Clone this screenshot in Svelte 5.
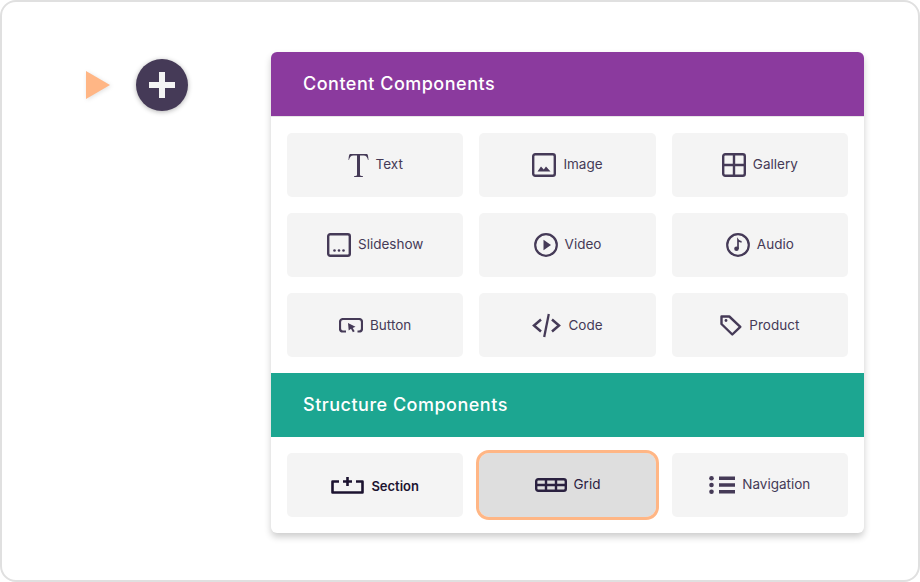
<script>
  // Add-component picker: trigger on the left, two groups of tiles on the right.
  const contentTiles = [
    { label: 'Text', icon: 'text' },
    { label: 'Image', icon: 'image' },
    { label: 'Gallery', icon: 'gallery' },
    { label: 'Slideshow', icon: 'slideshow' },
    { label: 'Video', icon: 'video' },
    { label: 'Audio', icon: 'audio' },
    { label: 'Button', icon: 'button' },
    { label: 'Code', icon: 'code' },
    { label: 'Product', icon: 'product' }
  ];
  const structureTiles = [
    { label: 'Section', icon: 'section', dark: true },
    { label: 'Grid', icon: 'grid', active: true },
    { label: 'Navigation', icon: 'navigation' }
  ];
</script>

{#snippet icon(name)}
  {#if name === 'text'}
    <svg width="21" height="25" viewBox="0 0 21 25" class="ico">
      <path d="M.5 7C.7 3.200 1.200 1 2 1h17c.8 0 1.300 2.200 1.500 6h-.5c-.6-2.800-1.700-4.600-4.500-4.600H12v19.400c0 1 1 1.400 3 1.500V24H6v-.7c2-.1 3-.5 3-1.500V2.400H5.500C2.700 2.400 1.600 4.200 1 7z" fill="currentColor"/>
    </svg>
  {:else if name === 'image'}
    <svg width="24" height="24" viewBox="0 0 24 24" class="ico">
      <rect x="1.200" y="1.200" width="21.600" height="21.600" rx="2" fill="none" stroke="currentColor" stroke-width="2.400"/>
      <path d="M5.500 18.500l3.500-5 2.800 3 2.200-3 4.500 5z" fill="currentColor"/>
    </svg>
  {:else if name === 'gallery'}
    <svg width="24" height="24" viewBox="0 0 24 24" class="ico">
      <rect x="1.200" y="1.200" width="21.600" height="21.600" rx="2" fill="none" stroke="currentColor" stroke-width="2.400"/>
      <path d="M12 1v22M1 12h22" stroke="currentColor" stroke-width="2.400"/>
    </svg>
  {:else if name === 'slideshow'}
    <svg width="24" height="24" viewBox="0 0 24 24" class="ico">
      <rect x="1.200" y="1.200" width="21.600" height="21.600" rx="2" fill="none" stroke="currentColor" stroke-width="2.400"/>
      <circle cx="7.500" cy="17.500" r="1.300" fill="currentColor"/>
      <circle cx="12" cy="17.500" r="1.300" fill="currentColor"/>
      <circle cx="16.500" cy="17.500" r="1.300" fill="currentColor"/>
    </svg>
  {:else if name === 'video'}
    <svg width="24" height="24" viewBox="0 0 24 24" class="ico">
      <circle cx="12" cy="12" r="10.800" fill="none" stroke="currentColor" stroke-width="2.200"/>
      <path d="M9.500 6.800l7.500 5.200-7.500 5.200z" fill="currentColor"/>
    </svg>
  {:else if name === 'audio'}
    <svg width="24" height="24" viewBox="0 0 24 24" class="ico">
      <circle cx="12" cy="12" r="10.800" fill="none" stroke="currentColor" stroke-width="2.200"/>
      <circle cx="10.500" cy="15.800" r="2.300" fill="currentColor"/>
      <path d="M12 16V7c1 1.400 2.200 1.800 3.600 1.900" fill="none" stroke="currentColor" stroke-width="1.700"/>
    </svg>
  {:else if name === 'button'}
    <svg width="24" height="15" viewBox="0 0 24 15" class="ico">
      <path d="M7 13.500H4a3 3 0 0 1-3-3V4a3 3 0 0 1 3-3h16a3 3 0 0 1 3 3v6.500a3 3 0 0 1-3 3h-1.500" fill="none" stroke="currentColor" stroke-width="2.200"/>
      <path d="M9 5l7.500 3.800-2.800 1.100 2 3.300-1.800 1-1.900-3.400-2.300 1.800z" fill="currentColor"/>
    </svg>
  {:else if name === 'code'}
    <svg width="29" height="25" viewBox="0 0 29 25" class="ico">
      <path d="M9 6.500L2 12.500l7 6M20 6.500l7 6-7 6" fill="none" stroke="currentColor" stroke-width="2.500"/>
      <path d="M16.800 1l-4.600 23" fill="none" stroke="currentColor" stroke-width="2.300"/>
    </svg>
  {:else if name === 'product'}
    <svg width="22" height="21" viewBox="0 0 22 21" class="ico">
      <path d="M1.500 1.500h7.800l11 10.300-8 7.700L1.500 9z" fill="none" stroke="currentColor" stroke-width="2.400" stroke-linejoin="round"/>
      <circle cx="6" cy="5.500" r="1.400" fill="currentColor"/>
    </svg>
  {:else if name === 'section'}
    <svg width="33" height="18" viewBox="0 0 33 18" class="ico">
      <path d="M8 5.500H1.500v11h30v-11H25" fill="none" stroke="currentColor" stroke-width="2.600" stroke-linejoin="round"/>
      <path d="M16.500 1v9M12 5.500h9" fill="none" stroke="currentColor" stroke-width="2.600"/>
    </svg>
  {:else if name === 'grid'}
    <svg width="32" height="14" viewBox="0 0 32 14" class="ico">
      <rect x="1.200" y="1.200" width="29.600" height="11.600" rx="2" fill="#dedede" stroke="currentColor" stroke-width="2.400"/>
      <path d="M1 7h30M11 1v12M21 1v12" stroke="currentColor" stroke-width="2.400"/>
    </svg>
  {:else if name === 'navigation'}
    <svg width="26" height="18" viewBox="0 0 26 18" class="ico">
      <circle cx="2.500" cy="2.300" r="2.300" fill="currentColor"/>
      <circle cx="2.500" cy="9" r="2.300" fill="currentColor"/>
      <circle cx="2.500" cy="15.700" r="2.300" fill="currentColor"/>
      <path d="M10 2.300h16M10 9h16M10 15.700h16" stroke="currentColor" stroke-width="3.400"/>
    </svg>
  {/if}
{/snippet}

{#snippet tile(t)}
  <div class="tile" class:active={t.active} class:dark={t.dark}>
    {@render icon(t.icon)}
    <span class="label">{t.label}</span>
  </div>
{/snippet}

<main class="frame">
  <div class="trigger">
    <svg class="arrow" width="24" height="28" viewBox="0 0 24 28">
      <path d="M0 0l24 14L0 28z" fill="#ffb685"/>
    </svg>
    <div class="add">
      <svg width="26" height="26" viewBox="0 0 26 26">
        <path d="M13 0v26M0 13h26" stroke="#f4f4f4" stroke-width="6"/>
      </svg>
    </div>
  </div>

  <section class="panel">
    <h2 class="head purple">Content Components</h2>
    <div class="tiles">
      {#each contentTiles as t}
        {@render tile(t)}
      {/each}
    </div>
    <h2 class="head teal">Structure Components</h2>
    <div class="tiles">
      {#each structureTiles as t}
        {@render tile(t)}
      {/each}
    </div>
  </section>
</main>

<style>
  :global(body) {
    margin: 0;
    background: #fff;
  }

  .frame {
    box-sizing: border-box;
    width: 920px;
    height: 582px;
    border: 2px solid #e0e0e0;
    border-radius: 16px;
    padding: 50px 0 0 84px;
    display: flex;
    align-items: flex-start;
    background: #fff;
  }

  .trigger {
    display: flex;
    align-items: center;
    gap: 26px;
    width: 185px;
    margin-top: 7px;
  }
  .arrow {
    flex: none;
    filter: drop-shadow(1px 1px 2px rgba(0, 0, 0, 0.12));
  }
  .add {
    width: 52px;
    height: 52px;
    border-radius: 50%;
    background: #453a57;
    box-shadow: 0 1px 5px rgba(0, 0, 0, 0.3);
    display: flex;
    align-items: center;
    justify-content: center;
  }

  .panel {
    width: 593px;
    background: #fff;
    border-radius: 6px;
    overflow: hidden;
    box-shadow: 0 4px 7px rgba(0, 0, 0, 0.2);
  }

  .head {
    box-sizing: border-box;
    margin: 0;
    height: 64px;
    padding: 0 32px 2px;
    display: flex;
    align-items: center;
    font-family: "Inter", "Liberation Sans", sans-serif;
    font-size: 18px;
    font-weight: 500;
    color: #fff;
    letter-spacing: 0.5px;
  }
  .purple {
    background: #8b3a9e;
    height: 65px;
    border-bottom: 1px solid #e6e6e6;
  }
  .teal { background: #1ca691; }

  .tiles {
    display: grid;
    grid-template-columns: repeat(3, 1fr);
    grid-auto-rows: 64px;
    gap: 16px;
    padding: 16px;
  }

  .tile {
    display: flex;
    align-items: center;
    justify-content: center;
    gap: 7px;
    background: #f4f4f4;
    border-radius: 5px;
    color: #453a57;
    font-family: "Inter", "Liberation Sans", sans-serif;
    font-size: 13.5px;
  }
  .tile:nth-child(-n + 6) .label {
    margin-bottom: 2px;
  }
  .tile.dark {
    color: #1c1330;
    font-weight: 600;
    font-size: 13px;
  }
  .tile.dark .label {
    margin: 2px 0 0;
  }
  .tile.active {
    background: #dedede;
    outline: 3px solid #ffb685;
    outline-offset: 0;
    border-radius: 10px;
    color: #2a2140;
  }
  .tile.active .label {
    margin-bottom: 2px;
  }
  .ico {
    flex: none;
  }
</style>
